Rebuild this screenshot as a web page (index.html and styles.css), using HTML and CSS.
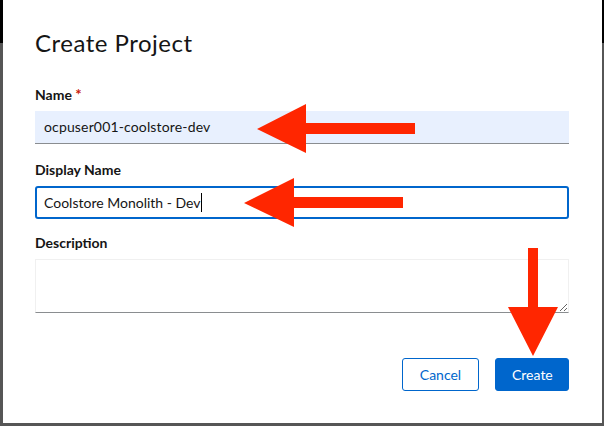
FILE: index.html
```html
<!DOCTYPE html>
<html lang="en">
<head>
<meta charset="utf-8">
<title>Create Project</title>
<link rel="stylesheet" href="styles.css">
</head>
<body>
<div class="page">
  <div class="modal">
    <h1 class="title">Create Project</h1>
    <div class="field field-name">
      <label class="label">Name <span class="req">*</span></label>
      <div class="control control-autofill">ocpuser001-coolstore-dev</div>
    </div>
    <div class="field field-display">
      <label class="label">Display Name</label>
      <div class="control control-focus">Coolstore Monolith - Dev<span class="caret"></span></div>
    </div>
    <div class="field field-desc">
      <label class="label">Description</label>
      <textarea class="textarea"></textarea>
    </div>
    <div class="actions">
      <button class="btn btn-secondary">Cancel</button>
      <button class="btn btn-primary">Create</button>
    </div>
  </div>
  <div class="backdrop-row">
    <span class="bd-link">mple application</span>
    <span class="bd-text bd-mid">Create resources from their YAML</span>
    <span class="bd-text bd-right">Browse the catalog</span>
  </div>
</div>
<svg class="arrows" width="604" height="426" viewBox="0 0 604 426" aria-hidden="true">
  <polygon points="257,129 306,104 306,123 415,123 415,134 306,134 306,153" fill="#ff2600"/>
  <polygon points="244,203 294,178 294,197 403,197 403,208 294,208 294,227" fill="#ff2600"/>
  <polygon points="528,248 538,248 538,307 558,307 533,356 508,307 528,307" fill="#ff2600"/>
</svg>
</body>
</html>
```

FILE: styles.css
```css
* { box-sizing: border-box; }
html, body { margin: 0; padding: 0; }
body {
  width: 604px;
  height: 426px;
  overflow: hidden;
  position: relative;
  background: linear-gradient(#000 0, #000 43px, #565656 43px, #565656 100%);
  font-family: Lato, "Open Sans", sans-serif;
  color: #151515;
}
.page { display: flex; flex-direction: column; }
.modal {
  margin-left: 3px;
  width: 599px;
  height: 423px;
  background: #fff;
  padding: 28px 33px 0 32px;
  display: flex;
  flex-direction: column;
}
.title {
  margin: 0;
  font-size: 24px;
  line-height: 30px;
  font-weight: 400;
  letter-spacing: 0.5px;
  color: #151515;
}
.field { display: flex; flex-direction: column; }
.field-name { margin-top: 26px; }
.field-display { margin-top: 16px; }
.field-desc { margin-top: 14px; }
.label {
  font-size: 14px;
  line-height: 20px;
  font-weight: 700;
  margin-bottom: 6px;
}
.req { color: #c9190b; font-size: 15px; }
.control {
  height: 33px;
  font-size: 14px;
  line-height: 20px;
  letter-spacing: 0.15px;
  display: flex;
  align-items: center;
  padding: 0 9px;
  color: #151515;
}
.control-autofill {
  background: #e8f0fe;
  border-bottom: 1px solid #8a8d90;
}
.control-focus {
  border: 2px solid #0066cc;
  border-radius: 3px;
  padding-left: 7px;
  letter-spacing: 0;
}
.caret {
  display: inline-block;
  width: 1px;
  height: 19px;
  background: #000;
}
.textarea {
  display: block;
  width: 100%;
  height: 54px;
  margin: 0;
  border: 1px solid #f0f0f0;
  border-bottom-color: #8a8d90;
  border-radius: 0;
  font-family: inherit;
  font-size: 14px;
  resize: vertical;
  background: #fff;
}
.actions {
  margin-top: 45px;
  display: flex;
  justify-content: flex-end;
  gap: 16px;
}
.btn {
  height: 33px;
  font-family: inherit;
  font-size: 14px;
  border-radius: 3px;
  padding: 0 16px;
  cursor: pointer;
}
.btn-secondary {
  width: 77px;
  background: #fff;
  color: #0066cc;
  border: 1px solid #0066cc;
}
.btn-primary {
  width: 74px;
  background: #0066cc;
  color: #fff;
  border: 1px solid #0066cc;
}
.backdrop-row {
  display: flex;
  height: 20px;
  font-size: 14px;
  line-height: 18px;
  white-space: nowrap;
}
.bd-link { color: #1f3a5c; width: 225px; margin-top: 1px; }
.bd-text { color: #222; margin-top: 1px; }
.bd-mid { width: 238px; }
.arrows {
  position: absolute;
  top: 0;
  left: 0;
  pointer-events: none;
}
```
